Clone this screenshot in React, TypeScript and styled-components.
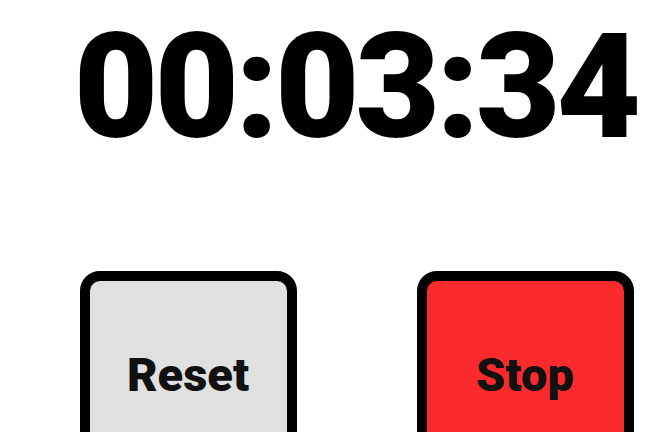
import React from "react";
import styled, { createGlobalStyle } from "styled-components";

const Global = createGlobalStyle`
  html, body { margin: 0; padding: 0; background: #ffffff; overflow: hidden; }
  body { font-family: Roboto, "Liberation Sans", sans-serif; }
`;

const Page = styled.div`
  display: flex;
  flex-direction: column;
  align-items: center;
  padding-left: 58px;
  padding-top: 15px;
`;

const Timer = styled.div`
  font-family: Roboto, "Liberation Sans", sans-serif;
  font-weight: 900;
  font-size: 146px;
  line-height: 146px;
  color: #000;
  letter-spacing: -4px;
`;

const Controls = styled.div`
  display: flex;
  gap: 120px;
  margin-top: 110px;
  margin-left: 2px;
`;

const Button = styled.button<{ $bg: string }>`
  box-sizing: border-box;
  width: 217px;
  height: 206px;
  border: 10px solid #000;
  border-radius: 20px;
  background: ${(p) => p.$bg};
  color: #111;
  font-family: Roboto, "Liberation Sans", sans-serif;
  font-weight: 900;
  font-size: 47px;
  display: flex;
  align-items: center;
  justify-content: center;
  padding: 0;
  cursor: pointer;
`;

export default function App() {
  return (
    <>
      <Global />
      <Page>
        <Timer>00:03:34</Timer>
        <Controls>
          <Button $bg="#e0e0e0">Reset</Button>
          <Button $bg="#fb2a2c">Stop</Button>
        </Controls>
      </Page>
    </>
  );
}
